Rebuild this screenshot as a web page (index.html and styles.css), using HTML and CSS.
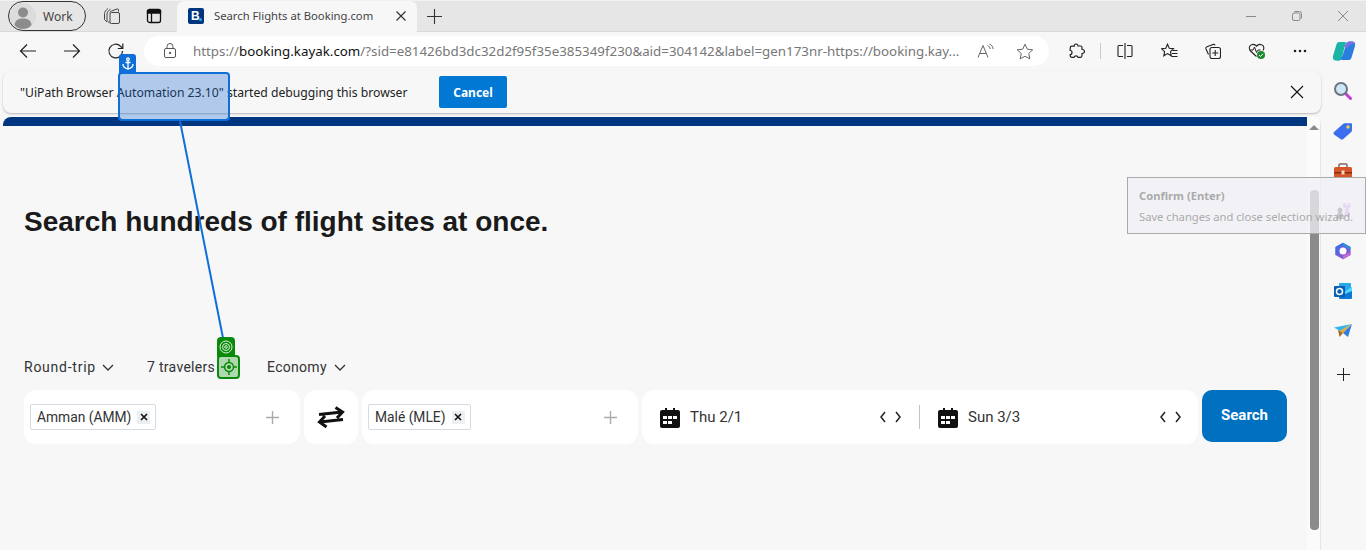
FILE: index.html
```html
<!DOCTYPE html>
<html lang="en">
<head>
    <meta charset="UTF-8">
    <title>Search Flights at Booking.com</title>
    <link rel="stylesheet" href="styles.css">
</head>
<body>
    <div class="tabstrip">
        <div class="profile">
            <svg class="avatar" width="26" height="26" viewBox="0 0 26 26"><circle cx="13" cy="13" r="13" fill="#dcdcdc"/><circle cx="13" cy="9.5" r="5" fill="#8c8c8c"/><path d="M4.5 22c.5-5 4-6.500 8.500-6.500s8 1.500 8.500 6.500c-2 2.500-5 4-8.500 4s-6.500-1.500-8.500-4z" fill="#8c8c8c"/></svg>
            <span>Work</span>
        </div>
        <div class="strip-btn collections">
            <svg width="18" height="18" viewBox="0 0 18 18" fill="none" stroke="#444"><path d="M4 15L1.500 12.500V6.500C1.500 5 3 3 5 1.500"/><path d="M7 16.500L4 13.500V7c0-1.500 1.500-3.500 3.500-5"/><path d="M7 5.500c0-.8.700-1.500 1.500-1.500L14 2c1-.3 1.500.2 1.500 1v1.500"/><rect x="7" y="5.500" width="9.500" height="11" rx="1.500"/></svg>
        </div>
        <div class="strip-btn">
            <svg width="16" height="16" viewBox="0 0 16 16" fill="none" stroke="#111" stroke-width="1.300"><rect x="1.500" y="1.500" width="13" height="13" rx="2"/><path d="M5.500 5v9.500"/><path d="M1.500 2.500h13v2.500h-13z" fill="#111"/></svg>
        </div>
        <div class="tab">
            <div class="favicon">B<i></i></div>
            <span class="tab-title">Search Flights at Booking.com</span>
            <svg width="12" height="12" viewBox="0 0 12 12" stroke="#333" stroke-width="1.200"><path d="M1.500 1.500l9 9M10.500 1.500l-9 9"/></svg>
        </div>
        <svg class="new-tab" width="15" height="15" viewBox="0 0 15 15" stroke="#333" stroke-width="1.100"><path d="M7.500 0v15M0 7.500h15"/></svg>
        <div class="win-controls">
            <svg width="12" height="12" viewBox="0 0 12 12" stroke="#8a8a8a"><path d="M1 6.500h10"/></svg>
            <svg width="12" height="12" viewBox="0 0 12 12" fill="none" stroke="#8a8a8a"><rect x="1.500" y="3" width="7.500" height="7.500" rx="1.500"/><path d="M3.500 1.500h5a2 2 0 0 1 2 2v5"/></svg>
            <svg width="12" height="12" viewBox="0 0 12 12" stroke="#8a8a8a"><path d="M1 1l10 10M11 1L1 11"/></svg>
        </div>
    </div>

    <div class="toolbar">
        <div class="nav-btns">
            <svg width="18" height="16" viewBox="0 0 18 16" fill="none" stroke="#222" stroke-width="1.200"><path d="M17 8H1.500M8 1.500L1.500 8 8 14.500"/></svg>
            <svg width="18" height="16" viewBox="0 0 18 16" fill="none" stroke="#222" stroke-width="1.200"><path d="M1 8h15.500M10 1.500L16.500 8 10 14.500"/></svg>
            <svg width="18" height="18" viewBox="0 0 18 18" fill="none" stroke="#222" stroke-width="1.200"><path d="M15.500 9a6.800 6.800 0 1 1-2-4.800L15.500 6.500"/><path d="M15.800 1.500v5h-5"/></svg>
        </div>
        <div class="address">
            <svg width="14" height="16" viewBox="0 0 14 16" fill="none" stroke="#555"><rect x="1.500" y="5.500" width="11" height="9" rx="1.500"/><path d="M4 5.500V3.500a3 3 0 0 1 6 0v2"/><circle cx="7" cy="10" r=".8" fill="#555"/></svg>
            <div class="url"><span class="dim">https://</span>booking.kayak.com<span class="dim">/?sid=e81426bd3dc32d2f95f35e385349f230&amp;aid=304142&amp;label=gen173nr-https://booking.kay...</span></div>
            <svg class="read" width="18" height="16" viewBox="0 0 18 16" fill="none" stroke="#666"><path d="M1 14.500L6 2.500l5 12M2.800 10.500h6.400"/><path d="M10.500 2.500c1.500.5 2.500 2 2.700 3.500M12.500 1c2 .8 3.500 2.700 3.700 5"/></svg>
            <svg class="star" width="18" height="17" viewBox="0 0 18 17" fill="none" stroke="#666"><path d="M9 1.200l2.300 5 5.400.6-4 3.700 1.100 5.400L9 13.200l-4.800 2.700 1.100-5.400-4-3.700 5.400-.6z"/></svg>
        </div>
        <div class="tool-icons">
            <svg class="i-ext" width="16" height="16" viewBox="0 0 16 16" fill="none" stroke="#222" stroke-width="1.200"><path d="M6 1.200c1.500-.6 3 .4 3 1.800h2.500c.8 0 1.500.7 1.500 1.500v2c1.800 0 2.500 1.200 2.500 2s-.7 2-2.500 2v2c0 1-.7 1.800-1.500 1.800H9c-.3-1-1-1.500-2-1.500s-1.700.5-2 1.500H3c-1 0-1.800-.8-1.800-1.800V11.500c1.300 0 1.800-1 1.800-2s-.5-2-1.800-2V5c0-1 .8-1.800 1.800-1.800h2.300c0-1 .2-1.700.7-2z"/></svg>
            <span class="i-sep"></span>
            <svg class="i-split" width="16" height="16" viewBox="0 0 16 16" fill="none" stroke="#222" stroke-width="1.100"><path d="M8 0v16M6 2.500H2a1 1 0 0 0-1 1v9a1 1 0 0 0 1 1h4M10 2.500h4a1 1 0 0 1 1 1v9a1 1 0 0 1-1 1h-4"/></svg>
            <svg class="i-fav" width="17" height="16" viewBox="0 0 17 16" fill="none" stroke="#222" stroke-width="1.100"><path d="M6.500 1.200l1.800 4 4.200.5-3 2.900.8 4.200-3.800-2.200-3.700 2.200.8-4.200-3-2.900 4.200-.5z"/><path d="M11.500 7.500h5M11 10.500h5.500M10.500 13.500h6"/></svg>
            <svg class="i-coll" width="16" height="16" viewBox="0 0 16 16" fill="none" stroke="#222" stroke-width="1.100"><path d="M3.500 11.500L1 6c-.4-1 .1-2 1-2.300L8 1.500c.9-.3 1.700 0 2.100.8"/><rect x="5" y="4.500" width="10.500" height="11" rx="2"/><path d="M10.200 7v6M7.200 10h6"/></svg>
            <svg class="i-health" width="18" height="18" viewBox="0 0 18 18"><path d="M8.500 14.500L2.500 9C.5 7 1 3.500 3.500 2.700 5.500 2 7.500 2.800 8.500 4.200c1-1.400 3-2.200 5-1.500 2.500.800 3 3.600 1.500 5.800" fill="none" stroke="#222" stroke-width="1.100"/><path d="M1.500 8h3.500l1.500-3 2 5.500 1.500-2.500h2.500" fill="none" stroke="#222"/><circle cx="13" cy="13" r="4" fill="#1a8a2e"/><path d="M11 13l1.500 1.500 2.500-2.800" fill="none" stroke="#fff"/></svg>
            <svg class="i-more" width="14" height="4" viewBox="0 0 14 4" fill="#222"><circle cx="2" cy="2" r="1.300"/><circle cx="7" cy="2" r="1.300"/><circle cx="12" cy="2" r="1.300"/></svg>
            <svg class="i-copilot" width="24" height="24" viewBox="0 0 24 24"><path d="M7 3h7l-4 15c-.5 2-2 3.500-4 3.500H4C1.500 21.500.3 19.500 1 17L4 7C4.700 4.500 5.500 3 7 3z" fill="#1bb5a5"/><path d="M17 21H9l5-15c.6-2 2-3.500 4-3.500h2c2.500 0 3.700 2 3 4.500l-3 10c-.7 2.500-1.500 4-3 4z" fill="#2b7de0"/><path d="M12.500 7.500C13.500 4 15 2.500 18 2.500h2c1.500 0 2.600.7 3.200 2-3.500.8-6.500 1-7.700 5z" fill="#7a6fe0"/><path d="M11 16.500c-.7 3-2.500 5-5 5H4.500c3-.8 5-2.200 6.500-5z" fill="#0f8fc8"/></svg>
        </div>
    </div>

    <div class="main">
        <div class="content">
            <div class="infobar">
                <span class="info-text">"UiPath Browser Automation 23.10" started debugging this browser</span>
                <button class="cancel">Cancel</button>
                <svg class="info-close" width="14" height="14" viewBox="0 0 14 14" stroke="#111" stroke-width="1.100"><path d="M1 1l12 12M13 1L1 13"/></svg>
            </div>
            <div class="page">
                <div class="page-scroll">
                    <div class="brand-bar"></div>
                    <div class="search-area">
                        <h1>Search hundreds of flight sites at once.</h1>
                        <div class="options">
                            <div class="option opt-trip">Round-trip <svg width="12" height="7" viewBox="0 0 12 7" fill="none" stroke="#333" stroke-width="1.300"><path d="M1 1l5 5 5-5"/></svg></div>
                            <div class="option opt-travelers">7 travelers</div>
                            <div class="option">Economy <svg width="12" height="7" viewBox="0 0 12 7" fill="none" stroke="#333" stroke-width="1.300"><path d="M1 1l5 5 5-5"/></svg></div>
                        </div>
                        <div class="search-row">
                            <div class="box airport">
                                <div class="chip">Amman (AMM) <span class="chip-x"><svg width="8" height="8" viewBox="0 0 8 8" stroke="#111" stroke-width="1.600"><path d="M1 1l6 6M7 1L1 7"/></svg></span></div>
                                <svg width="15" height="15" viewBox="0 0 15 15" stroke="#aaa" stroke-width="1.400"><path d="M7.500 1v13M1 7.500h13"/></svg>
                            </div>
                            <div class="box swap">
                                <svg width="28" height="22" viewBox="0 0 28 22" fill="none" stroke="#111" stroke-width="3"><path d="M2 8.500l23-2.500M18.500 1.500l7 4.500-5.500 6M26 13.500l-23 2.500M9.500 21l-7-5 5.500-6"/></svg>
                            </div>
                            <div class="box airport">
                                <div class="chip">Malé (MLE) <span class="chip-x"><svg width="8" height="8" viewBox="0 0 8 8" stroke="#111" stroke-width="1.600"><path d="M1 1l6 6M7 1L1 7"/></svg></span></div>
                                <svg width="15" height="15" viewBox="0 0 15 15" stroke="#aaa" stroke-width="1.400"><path d="M7.500 1v13M1 7.500h13"/></svg>
                            </div>
                            <div class="box dates">
                                <div class="date date-first">
                                    <svg width="20" height="21" viewBox="0 0 20 21"><path d="M2 3h3V1h2v2h6V1h2v2h3a2 2 0 0 1 2 2v14a2 2 0 0 1-2 2H2a2 2 0 0 1-2-2V5a2 2 0 0 1 2-2z" fill="#111"/><path d="M3 9h4v3H3zM8 9h4v3H8zM13 9h4v3h-4zM3 14h4v3H3zM8 14h4v3H8z" fill="#fff"/></svg>
                                    <span class="date-text">Thu 2/1</span>
                                    <svg width="23" height="12" viewBox="0 0 23 12" fill="none" stroke="#222" stroke-width="1.500"><path d="M6 1L2 6l4 5M17 1l4 5-4 5"/></svg>
                                </div>
                                <div class="date">
                                    <svg width="20" height="21" viewBox="0 0 20 21"><path d="M2 3h3V1h2v2h6V1h2v2h3a2 2 0 0 1 2 2v14a2 2 0 0 1-2 2H2a2 2 0 0 1-2-2V5a2 2 0 0 1 2-2z" fill="#111"/><path d="M3 9h4v3H3zM8 9h4v3H8zM13 9h4v3h-4zM3 14h4v3H3zM8 14h4v3H8z" fill="#fff"/></svg>
                                    <span class="date-text">Sun 3/3</span>
                                    <svg width="23" height="12" viewBox="0 0 23 12" fill="none" stroke="#222" stroke-width="1.500"><path d="M6 1L2 6l4 5M17 1l4 5-4 5"/></svg>
                                </div>
                            </div>
                            <button class="search-btn">Search</button>
                        </div>
                    </div>
                </div>
                <div class="scrollbar">
                    <div class="scroll-up"></div>
                    <div class="scroll-thumb"></div>
                </div>
            </div>
        </div>

        <div class="sidebar">
            <svg width="20" height="20" viewBox="0 0 20 20"><path d="M12 12l5.500 5.500" stroke="#c23fd6" stroke-width="3" stroke-linecap="round"/><circle cx="8" cy="8" r="6" fill="#cfe6f7" stroke="#6b7480" stroke-width="2"/></svg>
            <svg width="20" height="18" viewBox="0 0 20 18"><path d="M1 10L10 2c.5-.5 1-.8 2-.8h6c.6 0 1 .4 1 1v6c0 .8-.3 1.500-1 2l-8 7c-.7.6-1.500.6-2.200 0L1 12.500c-.7-.8-.7-1.800 0-2.500z" fill="#3b6ff0"/><circle cx="15" cy="5" r="1.700" fill="#f5d33f"/></svg>
            <svg width="20" height="16" viewBox="0 0 20 16"><path d="M6 4V2a1 1 0 0 1 1-1h6a1 1 0 0 1 1 1v2" fill="none" stroke="#7a6a60" stroke-width="1.500"/><rect x="1" y="4" width="18" height="11" rx="1.500" fill="#d4552a"/><rect x="1" y="9" width="18" height="1.500" fill="#8a2d10"/><rect x="8.500" y="7.500" width="3" height="4" fill="#f2d9c0"/></svg>
            <svg width="20" height="20" viewBox="0 0 20 20"><path d="M3 18c0-3 1-5 2.500-6.500C4 10 4 7 7 6.500c3 .5 3 3.500 1.500 5C10 13 11 15 11 18z" fill="#555"/><path d="M11 2h2v2h2V2h2v2h1v2l-2 1 1 9h-6l1-9-2-1V2z" fill="#c79bee"/></svg>
            <svg width="18" height="18" viewBox="0 0 18 18"><path d="M9 .8L16.500 5v8L9 17.200 1.500 13V5z" fill="#7b5bd6"/><path d="M9 .8L16.500 5v3L9 4z" fill="#2e8fe0"/><path d="M1.500 5L9 .8v3L4.500 6.500v5L1.500 13z" fill="#3f6fe0"/><path d="M9 17.200L16.500 13v-3l-5 2.500L9 14z" fill="#c36ad6"/><circle cx="9" cy="9" r="3.500" fill="#fff"/></svg>
            <svg width="18" height="17" viewBox="0 0 18 17"><rect x="5" y="0" width="12" height="15" rx="1" fill="#28a8ea"/><path d="M5 7h13v8a1 1 0 0 1-1 1H6a1 1 0 0 1-1-1z" fill="#0f78d4"/><path d="M11 8l7-4v4l-7 3z" fill="#50d9ff"/><rect x="0" y="3" width="11" height="11" rx="1" fill="#0a5fb4"/><circle cx="5.500" cy="8.500" r="3" fill="none" stroke="#fff" stroke-width="1.500"/></svg>
            <svg width="18" height="14" viewBox="0 0 18 14"><path d="M0 3.500L18 0 6 7z" fill="#35b4e8"/><path d="M18 0L6 7l3 2z" fill="#f3a625"/><path d="M18 0l-4 13-5-4z" fill="#2f7de0"/><path d="M4 6l2 1 3 2-3.500 4z" fill="#a66a1a"/></svg>
            <svg class="side-add" width="13" height="13" viewBox="0 0 13 13" stroke="#222"><path d="M6.500 0v13M0 6.500h13"/></svg>
        </div>
    </div>

    <!-- automation overlay, sits over the page -->
    <svg class="link-line" width="60" height="225" viewBox="0 0 60 225"><path d="M1 1l43 217" stroke="#0f6fd8" stroke-width="2" fill="none"/></svg>
    <div class="anchor-tag">
        <svg width="12" height="13" viewBox="0 0 12 13" fill="none" stroke="#fff" stroke-width="1.300"><circle cx="6" cy="2.200" r="1.300"/><path d="M6 3.500V12M3.500 5.500h5M1 7c0 3 2.500 4.500 5 5 2.500-.5 5-2 5-5"/></svg>
    </div>
    <div class="anchor-box"></div>
    <div class="target-top">
        <svg width="14" height="14" viewBox="0 0 14 14" fill="none" stroke="#d9f0d9"><circle cx="7" cy="7" r="6"/><circle cx="7" cy="7" r="3.500"/><circle cx="7" cy="7" r="1.300"/></svg>
    </div>
    <div class="target-main">
        <svg width="16" height="16" viewBox="0 0 16 16" fill="none" stroke="#0a8a0a" stroke-width="1.500"><circle cx="8" cy="8" r="4.500"/><circle cx="8" cy="8" r="1.300" fill="#0a8a0a"/><path d="M8 0v3.500M8 12.500V16M0 8h3.500M12.500 8H16"/></svg>
    </div>
    <div class="confirm-tip">
        <div class="tip-title">Confirm (Enter)</div>
        <div class="tip-text">Save changes and close selection wizard.</div>
    </div>
</body>
</html>
```

FILE: styles.css
```css
html, body {
    height: 100%;
}
body {
    margin: 0;
    height: 550px;
    overflow: hidden;
    position: relative;
    background-color: #f7f7f7;
    font-family: "Noto Sans", "Open Sans", sans-serif;
    color: #222;
}
svg {
    display: block;
    flex: none;
}

/* tab strip */
.tabstrip {
    height: 32px;
    box-sizing: border-box;
    display: flex;
    align-items: center;
    background-color: #e6e6e6;
    border-top: 1px solid #f2f2f2;
    border-bottom: 1px solid #d9d9d9;
    padding-left: 8px;
}
.profile {
    width: 78px;
    height: 30px;
    box-sizing: border-box;
    border: 1px solid #333;
    border-radius: 15px;
    display: flex;
    align-items: center;
    gap: 7px;
    padding-left: 1px;
    font-size: 12px;
    color: #444;
}
.strip-btn {
    width: 42px;
    display: flex;
    justify-content: center;
}
.collections {
    margin-left: 5px;
}
.tab {
    width: 240px;
    height: 31px;
    margin: 0 0 -1px 2px;
    box-sizing: border-box;
    border-radius: 7px 7px 0 0;
    background-color: #f7f7f7;
    display: flex;
    align-items: center;
    padding: 0 10px 2px 11px;
}
.favicon {
    width: 16px;
    height: 16px;
    background-color: #003580;
    color: #fff;
    font: bold 12px/16px "Liberation Sans", sans-serif;
    padding-left: 3px;
    box-sizing: border-box;
    border-radius: 2px;
    position: relative;
}
.favicon i {
    position: absolute;
    right: 2px;
    bottom: 3px;
    width: 3px;
    height: 3px;
    border-radius: 50%;
    background-color: #2aa8f0;
}
.tab-title {
    flex: 1;
    margin-left: 10px;
    font-size: 11.25px;
    color: #444;
}
.new-tab {
    margin-left: 10px;
}
.win-controls {
    margin-left: auto;
    width: 104px;
    padding-right: 17px;
    box-sizing: content-box;
    display: flex;
    justify-content: space-between;
}

/* toolbar */
.toolbar {
    height: 38px;
    display: flex;
    align-items: center;
    box-sizing: border-box;
}
.nav-btns {
    width: 144px;
    box-sizing: border-box;
    display: flex;
    align-items: center;
    gap: 26px;
    padding-left: 19px;
}
.address {
    width: 905px;
    height: 30px;
    background-color: #fff;
    border-radius: 15px;
    display: flex;
    align-items: center;
    padding-left: 19px;
    box-sizing: border-box;
}
.url {
    margin-left: 16px;
    width: 770px;
    font-size: 13.34px;
    white-space: nowrap;
    color: #111;
}
.url .dim {
    color: #777;
}
.read {
    margin-left: 14px;
}
.star {
    margin-left: 21px;
}
.tool-icons {
    position: relative;
    flex: 1;
    height: 24px;
    display: flex;
    align-items: center;
    padding-left: 20px;
}
.i-sep {
    width: 1px;
    height: 16px;
    background-color: #c8c8c8;
    margin-left: 15px;
}
.i-split {
    margin-left: 16px;
}
.i-fav {
    margin-left: 28px;
}
.i-coll {
    margin-left: 27px;
}
.i-health {
    margin-left: 27px;
}
.i-more {
    margin-left: 27px;
}
.i-copilot {
    margin-left: 25px;
}

/* below the toolbar */
.main {
    height: 480px;
    display: flex;
    padding-left: 3px;
}
.content {
    width: 1318px;
    display: flex;
    flex-direction: column;
}
.infobar {
    height: 42px;
    margin-top: 1px;
    box-sizing: border-box;
    background-color: #f7f7f7;
    border-radius: 8px;
    box-shadow: 0 1px 2px rgba(0, 0, 0, 0.25);
    display: flex;
    align-items: center;
    padding-left: 17px;
}
.info-text {
    width: 419px;
    font-size: 12.2px;
    color: #222;
    white-space: nowrap;
}
.cancel {
    width: 68px;
    height: 32px;
    border: none;
    border-radius: 2px;
    background-color: #0078d4;
    color: #fff;
    font: bold 12px "Noto Sans", sans-serif;
}
.info-close {
    margin-left: auto;
    margin-right: 17px;
}
.page {
    flex: 1;
    margin-top: 4px;
    display: flex;
    min-height: 0;
    border-radius: 8px 8px 0 0;
    overflow: hidden;
}
.page-scroll {
    flex: 1;
    background-color: #f7f7f8;
}
.brand-bar {
    height: 9px;
    background-color: #003580;
}
.search-area {
    padding-left: 21px;
}
h1 {
    margin: 80px 0 0;
    font: bold 28px/32px "Liberation Sans", Arial, sans-serif;
    color: #1a1a1a;
}
.options {
    margin-top: 119px;
    height: 20px;
    display: flex;
    align-items: center;
    font: 14px Roboto, sans-serif;
    letter-spacing: 0.3px;
    color: #333;
}
.option {
    display: flex;
    align-items: center;
    gap: 7px;
}
.opt-trip {
    width: 123px;
    gap: 6px;
    letter-spacing: 0.75px;
}
.opt-travelers {
    width: 120px;
}
.search-row {
    margin-top: 13px;
    display: flex;
    gap: 4px;
}
.box {
    height: 54px;
    background-color: #fff;
    border-radius: 12px;
    display: flex;
    align-items: center;
    box-sizing: border-box;
}
.airport {
    width: 276px;
    padding: 0 20px 0 6px;
    justify-content: space-between;
}
.chip {
    height: 26px;
    box-sizing: border-box;
    border: 1px solid #d5dbe2;
    border-radius: 2px;
    padding: 0 5px 0 6px;
    display: flex;
    align-items: center;
    gap: 6px;
    font: 13.8px Roboto, sans-serif;
    color: #333;
}
.chip-x {
    width: 13px;
    height: 13px;
    background-color: #edf0f3;
    display: flex;
    align-items: center;
    justify-content: center;
}
.swap {
    width: 54px;
    justify-content: center;
}
.dates {
    width: 556px;
}
.date {
    width: 278px;
    height: 24px;
    display: flex;
    align-items: center;
    box-sizing: border-box;
    padding: 0 16px 0 18px;
}
.date-first {
    padding-right: 17px;
    border-right: 1px solid #b9c4d0;
}
.date-text {
    flex: 1;
    margin-left: 10px;
    font: 15px Roboto, sans-serif;
    color: #333;
}
.search-btn {
    width: 85px;
    height: 52px;
    border: none;
    border-radius: 10px;
    background-color: #0070c0;
    color: #fff;
    font: bold 15px Roboto, sans-serif;
    padding-bottom: 4px;
}
.scrollbar {
    width: 13px;
    background-color: #fbfbfb;
    border-right: 1px solid #e4e4e4;
}
.scroll-up {
    width: 0;
    height: 0;
    margin: 8px 0 0 2px;
    border-left: 5px solid transparent;
    border-right: 5px solid transparent;
    border-bottom: 5px solid #8b8b8b;
}
.scroll-thumb {
    width: 9px;
    height: 340px;
    margin: 60px 0 0 3px;
    background-color: #8b8b8b;
    border-radius: 4px;
}
.sidebar {
    flex: 1;
    padding: 1px 1px 0 0;
    display: grid;
    grid-auto-rows: 40px;
    place-items: center;
}
.side-add {
    margin-top: 6px;
}

/* overlay */
.link-line {
    position: absolute;
    left: 179px;
    top: 120px;
}
.anchor-tag {
    position: absolute;
    left: 119px;
    top: 54px;
    width: 17px;
    height: 19px;
    background-color: #0f6fd8;
    border-radius: 3px 3px 0 0;
    display: flex;
    align-items: center;
    justify-content: center;
}
.anchor-box {
    position: absolute;
    left: 118px;
    top: 72px;
    width: 112px;
    height: 49px;
    box-sizing: border-box;
    border: 2px solid #0f6fd8;
    border-radius: 4px;
    background-color: rgba(15, 100, 210, 0.3);
    box-shadow: inset 0 -2px 0 #aecbee;
}
.target-top {
    position: absolute;
    left: 217px;
    top: 337px;
    width: 18px;
    height: 20px;
    background-color: #0a8a0a;
    border-radius: 4px 4px 0 0;
    display: flex;
    align-items: center;
    justify-content: center;
}
.target-main {
    position: absolute;
    left: 217px;
    top: 355px;
    width: 23px;
    height: 24px;
    box-sizing: border-box;
    border: 2px solid #0a8a0a;
    border-radius: 4px;
    background-color: #b0d8b0;
    display: flex;
    align-items: center;
    justify-content: center;
}
.confirm-tip {
    position: absolute;
    left: 1127px;
    top: 177px;
    width: 239px;
    height: 57px;
    box-sizing: border-box;
    border: 1px solid #aaa;
    background-color: rgba(240, 240, 246, 0.75);
    padding: 10px 11px;
    white-space: nowrap;
    font-size: 11.2px;
    color: #aaa;
}
.tip-title {
    font-weight: bold;
    line-height: 16px;
}
.tip-text {
    margin-top: 5px;
    line-height: 16px;
}
```
